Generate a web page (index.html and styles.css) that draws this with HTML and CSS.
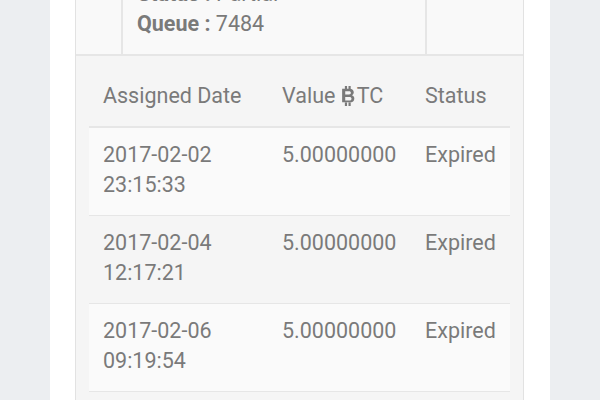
FILE: index.html
```html
<!DOCTYPE html>
<html>
<head>
<meta charset="utf-8">
<link rel="stylesheet" href="styles.css">
</head>
<body>
<div class="card">
  <div class="panel">
    <div class="info">
      <div class="info-cell"></div>
      <div class="info-cell info-main">
        <div class="line"><b>Status :</b> Partial</div>
        <div class="line"><b>Queue :</b> 7484</div>
      </div>
      <div class="info-cell"></div>
    </div>
    <div class="history">
      <table class="tbl">
        <thead>
          <tr>
            <th class="c1">Assigned Date</th>
            <th class="c2">Value <svg class="btc" viewBox="0 0 16 22" width="15" height="20"><rect x="4" y="0" width="2.4" height="4" fill="currentColor"/><rect x="8" y="0" width="2.4" height="4" fill="currentColor"/><rect x="4" y="18" width="2.4" height="4" fill="currentColor"/><rect x="8" y="18" width="2.4" height="4" fill="currentColor"/><path fill="currentColor" fill-rule="evenodd" d="M1 3h8.2c3 0 4.6 1.6 4.6 4 0 1.6-.8 2.6-2 3.1 1.6.5 2.6 1.7 2.6 3.6 0 2.7-1.8 4.3-5 4.3H1zM4.4 5.8v3.5h4.2c1.3 0 2-.6 2-1.8 0-1.1-.7-1.7-2-1.7zm0 6.2v3.9h4.6c1.5 0 2.3-.7 2.3-2 0-1.2-.8-1.9-2.3-1.9z"/></svg>TC</th>
            <th class="c3">Status</th>
          </tr>
        </thead>
        <tbody>
          <tr><td>2017-02-02<br>23:15:33</td><td>5.00000000</td><td>Expired</td></tr>
          <tr><td>2017-02-04<br>12:17:21</td><td>5.00000000</td><td>Expired</td></tr>
          <tr><td>2017-02-06<br>09:19:54</td><td>5.00000000</td><td>Expired</td></tr>
          <tr class="empty"><td></td><td></td><td></td></tr>
        </tbody>
      </table>
    </div>
  </div>
</div>
</body>
</html>
```
FILE: styles.css
```css
html, body {
  margin: 0;
  padding: 0;
}
body {
  background: #eceef1;
  font-family: Roboto, "Liberation Sans", sans-serif;
  color: #7a7a7a;
  overflow: hidden;
  height: 400px;
}
.card {
  margin: -36px 50px 0;
  background: #ffffff;
  padding: 0 26px 0 25px;
  height: 600px;
}
.panel {
  border: 1px solid #e2e2e2;
  border-top: none;
  background: #f5f5f5;
  height: 600px;
}
.info {
  display: grid;
  grid-template-columns: 45px 304px 1fr;
  background: #f9f9f9;
  border-bottom: 2px solid #e6e6e6;
}
.info-cell + .info-cell {
  border-left: 2px solid #e6e6e6;
}
.info-main {
  padding: 15px 14px 15px;
  font-size: 21.5px;
  line-height: 30px;
}
.info-main b {
  font-weight: 700;
}
.history {
  padding: 14px 13px 0 13px;
}
.tbl {
  width: 100%;
  border-collapse: collapse;
  font-size: 21.5px;
  line-height: 30px;
}
.tbl th {
  font-weight: 400;
  text-align: left;
  padding: 11px 12px 15px 14px;
  border-bottom: 2px solid #e6e6e6;
  white-space: nowrap;
}
.tbl td {
  padding: 12px 12px 15px 14px;
  border-top: 1px solid #e6e6e6;
  vertical-align: top;
}
.tbl tbody tr:nth-child(odd) {
  background: #fafafa;
}
.tbl .empty td {
  height: 60px;
}
.c1 { width: 153px; }
.c2 { width: 117px; }
.btc {
  vertical-align: -3px;
  margin-right: 1px;
}
```
